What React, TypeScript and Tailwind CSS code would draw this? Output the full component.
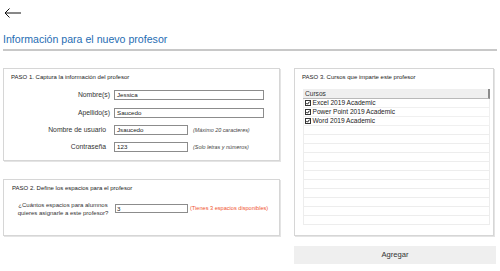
const courses = ["Excel 2019 Academic", "Power Point 2019 Academic", "Word 2019 Academic"];
const emptyRows = 11;

function Check() {
  return (
    <svg width="6" height="6" viewBox="0 0 6 6" className="shrink-0">
      <rect x="0.5" y="0.5" width="5" height="5" fill="white" stroke="#333" />
      <path d="M1.4 3 L2.5 4.2 L4.6 1.6" fill="none" stroke="#111" strokeWidth="1" />
    </svg>
  );
}

function Field({ label, value, w, hint, labelPr }: { label: string; value: string; w: string; hint?: string; labelPr: string }) {
  return (
    <div className="flex items-center h-[10px]">
      <div className={`w-[110px] text-right text-[6.8px] text-[#333] ${labelPr}`}>{label}</div>
      <div className={`h-[10px] border border-[#8c8c8c] bg-white text-[6.2px] leading-[8px] pl-[2px] text-[#222] ${w}`}>{value}</div>
      {hint && <div className="ml-[5px] text-[5.4px] italic text-[#444]">{hint}</div>}
    </div>
  );
}

export default function App() {
  return (
    <div className="w-[500px] h-[271px] overflow-hidden bg-white" style={{ fontFamily: '"Liberation Sans", Arial, sans-serif' }}>
      <div className="h-[30px] pt-[8px] pl-[4px]">
        <svg width="17" height="10" viewBox="0 0 17 10">
          <path d="M17 5 H1 M5.5 0.5 L1 5 L5.5 9.5" fill="none" stroke="#111" strokeWidth="1" />
        </svg>
      </div>
      <div className="h-[18px] pl-[3px] text-[10.6px] leading-[18px] text-[#1f6db3]">Información para el nuevo profesor</div>
      <div className="mx-[3px] mt-[1px] h-[2px] bg-[#c8c8c8]" />

      <div className="flex mt-[17px] pl-[3px]">
        <div className="w-[277px] flex flex-col gap-[18px]">
          <div className="h-[93px] border border-[#d6d6d6] shadow-[1px_1px_0_#e4e4e4]">
            <div className="mt-[3px] ml-[7px] h-[10px] text-[6px] leading-[10px] text-[#222]">PASO 1. Captura la información del profesor</div>
            <div className="mt-[8px] flex flex-col gap-[8px]">
              <Field label="Nombre(s)" value="Jessica" w="w-[150px]" labelPr="pr-[4px]" />
              <Field label="Apellido(s)" value="Saucedo" w="w-[150px]" labelPr="pr-[4px]" />
            </div>
            <div className="mt-[7px] flex flex-col gap-[7px]">
              <Field label="Nombre de usuario" value="Jsaucedo" w="w-[74px]" hint="(Máximo 20 caracteres)" labelPr="pr-[8px]" />
              <Field label="Contraseña" value="123" w="w-[74px]" hint="(Solo letras y números)" labelPr="pr-[8px]" />
            </div>
          </div>

          <div className="h-[57px] border border-[#d6d6d6] shadow-[1px_1px_0_#e4e4e4]">
            <div className="mt-[3px] ml-[8px] h-[10px] text-[6px] leading-[10px] text-[#222]">PASO 2. Define los espacios para el profesor</div>
            <div className="mt-[8px] flex items-start">
              <div className="ml-[10px] w-[98px] text-center text-[6px] leading-[8px] text-[#333]">
                ¿Cuántos espacios para alumnos
                <br />
                quieres asignarle a este profesor?
              </div>
              <div className="ml-[3px] mt-[3px] w-[73px] h-[9px] border border-[#8c8c8c] text-[6.2px] leading-[7px] pl-[1px] text-[#222]">3</div>
              <div className="ml-[2px] mt-[3px] text-[5.6px] leading-[9px] text-[#f0532f]">(Tienes 3 espacios disponibles)</div>
            </div>
          </div>
        </div>

        <div className="ml-[14px] w-[202px] flex flex-col gap-[10px]">
          <div className="w-[200px] h-[168px] border border-[#d6d6d6] shadow-[1px_1px_0_#e4e4e4]">
            <div className="mt-[3px] ml-[7px] h-[10px] text-[6px] leading-[10px] text-[#222]">PASO 3. Cursos que imparte este profesor</div>
            <div className="mt-[7px] ml-[8px] w-[187px]">
              <div className="h-[10px] flex items-center bg-[#efefef] border-b border-[#b9b9b9] border-r-2 border-r-[#8a8a8a] pl-[2px] text-[6.6px] text-[#333]">Cursos</div>
              {courses.map((c) => (
                <div key={c} className="h-[9px] flex items-center gap-[1.5px] pl-[1px] border-b border-x border-[#f0f0f0] text-[6.6px] text-[#222]">
                  <Check />
                  {c}
                </div>
              ))}
              {Array.from({ length: emptyRows }).map((_, i) => (
                <div key={i} className="h-[9px] border-b border-x border-[#ededed]" />
              ))}
            </div>
          </div>
          <button className="h-[18px] w-[202px] bg-[#efefef] text-[7.6px] text-[#333]">Agregar</button>
        </div>
      </div>
    </div>
  );
}
